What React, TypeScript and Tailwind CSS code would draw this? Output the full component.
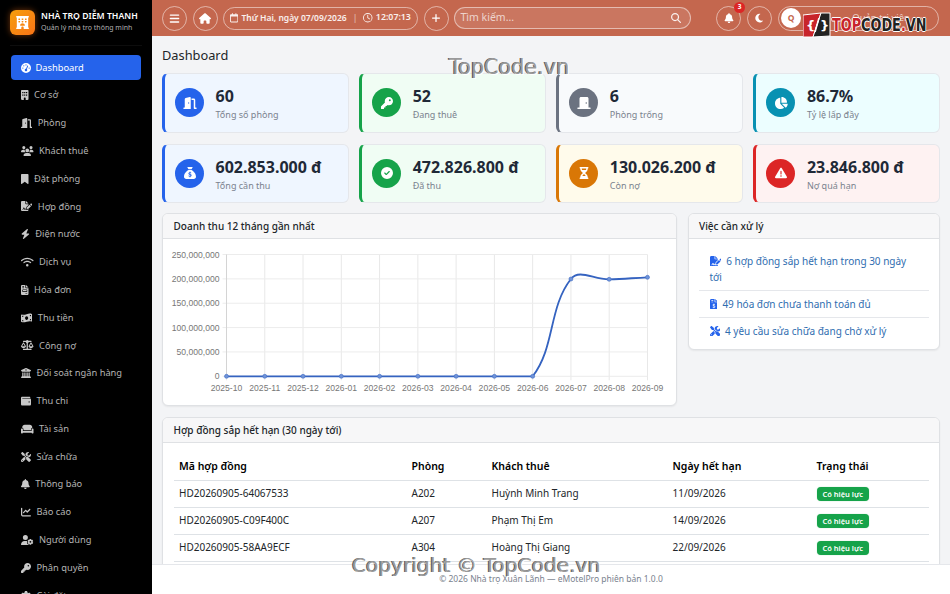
import React from 'react';
import {
  FaBars, FaHouse, FaRegCalendar, FaRegClock, FaPlus, FaMagnifyingGlass, FaBell, FaMoon, FaChevronDown,
  FaGaugeHigh, FaBuilding, FaDoorOpen, FaUsers, FaBookmark, FaFileSignature, FaBolt, FaWifi, FaFileInvoice,
  FaMoneyBillWave, FaScaleBalanced, FaBuildingColumns, FaWallet, FaCouch, FaScrewdriverWrench, FaChartLine,
  FaUserGear, FaKey, FaGear, FaDoorClosed, FaChartPie, FaSackDollar, FaCircleCheck, FaHourglassHalf,
  FaTriangleExclamation, FaFileInvoiceDollar, FaHotel,
} from 'react-icons/fa6';

// w is the icon's natural width at 10px tall, the labels start right after it
const navItems = [
  { icon: FaBuilding, w: 'w-[7.5px]', text: 'Cơ sở' },
  { icon: FaDoorOpen, w: 'w-[11.25px]', text: 'Phòng' },
  { icon: FaUsers, w: 'w-[12.5px]', text: 'Khách thuê' },
  { icon: FaBookmark, w: 'w-[7.5px]', text: 'Đặt phòng' },
  { icon: FaFileSignature, w: 'w-[11.25px]', text: 'Hợp đồng' },
  { icon: FaBolt, w: 'w-[8.75px]', text: 'Điện nước' },
  { icon: FaWifi, w: 'w-[12.5px]', text: 'Dịch vụ' },
  { icon: FaFileInvoice, w: 'w-[7.5px]', text: 'Hóa đơn' },
  { icon: FaMoneyBillWave, w: 'w-[11.25px]', text: 'Thu tiền' },
  { icon: FaScaleBalanced, w: 'w-[12.5px]', text: 'Công nợ' },
  { icon: FaBuildingColumns, w: 'w-[10px]', text: 'Đối soát ngân hàng' },
  { icon: FaWallet, w: 'w-[10px]', text: 'Thu chi' },
  { icon: FaCouch, w: 'w-[12.5px]', text: 'Tài sản' },
  { icon: FaScrewdriverWrench, w: 'w-[10px]', text: 'Sửa chữa' },
  { icon: FaBell, w: 'w-[8.75px]', text: 'Thông báo' },
  { icon: FaChartLine, w: 'w-[10px]', text: 'Báo cáo' },
  { icon: FaUserGear, w: 'w-[12.5px]', text: 'Người dùng' },
  { icon: FaKey, w: 'w-[10px]', text: 'Phân quyền' },
  { icon: FaGear, w: 'w-[10px]', text: 'Cài đặt' },
];

const stats = [
  { icon: FaDoorOpen, value: '60', label: 'Tổng số phòng', card: 'bg-[#eff6ff] border-l-[#2563eb]', dot: 'bg-[#2563eb]' },
  { icon: FaKey, value: '52', label: 'Đang thuê', card: 'bg-[#f0fdf4] border-l-[#16a34a]', dot: 'bg-[#16a34a]' },
  { icon: FaDoorClosed, value: '6', label: 'Phòng trống', card: 'bg-[#f8fafc] border-l-[#6b7280]', dot: 'bg-[#6b7280]' },
  { icon: FaChartPie, value: '86.7%', label: 'Tỷ lệ lấp đầy', card: 'bg-[#ecfeff] border-l-[#0891b2]', dot: 'bg-[#0891b2]' },
  { icon: FaSackDollar, value: '602.853.000 đ', label: 'Tổng cần thu', card: 'bg-[#eff6ff] border-l-[#2563eb]', dot: 'bg-[#2563eb]' },
  { icon: FaCircleCheck, value: '472.826.800 đ', label: 'Đã thu', card: 'bg-[#f0fdf4] border-l-[#16a34a]', dot: 'bg-[#16a34a]' },
  { icon: FaHourglassHalf, value: '130.026.200 đ', label: 'Còn nợ', card: 'bg-[#fffbeb] border-l-[#d97706]', dot: 'bg-[#d97706]' },
  { icon: FaTriangleExclamation, value: '23.846.800 đ', label: 'Nợ quá hạn', card: 'bg-[#fef2f2] border-l-[#dc2626]', dot: 'bg-[#dc2626]' },
];

const contracts = [
  { code: 'HD20260905-64067533', room: 'A202', name: 'Huỳnh Minh Trang', date: '11/09/2026' },
  { code: 'HD20260905-C09F400C', room: 'A207', name: 'Phạm Thị Em', date: '14/09/2026' },
  { code: 'HD20260905-58AA9ECF', room: 'A304', name: 'Hoàng Thị Giang', date: '22/09/2026' },
];

const months = ['2025-10', '2025-11', '2025-12', '2026-01', '2026-02', '2026-03', '2026-04', '2026-05', '2026-06', '2026-07', '2026-08', '2026-09'];
const ticks = ['250,000,000', '200,000,000', '150,000,000', '100,000,000', '50,000,000', '0'];

// chart area inside the svg, which starts at (163, 238) on the page
const X0 = 63.5;
const XSTEP = 38.27;
const Y0 = 15.5;
const YSTEP = 24.36;

function RevenueChart() {
  const pts = months.map((_, i) => X0 + i * XSTEP);
  const base = Y0 + 5 * YSTEP;
  const ys = [...Array(9).fill(base), 40, 40.3, 38.3];
  return (
    <svg width="513" height="167" viewBox="0 0 513 167" className="block">
      {pts.map((x) => (
        <line key={x} x1={x} x2={x} y1={Y0} y2={base + 4} stroke="#e8e8e8" />
      ))}
      {ticks.map((t, i) => (
        <g key={t}>
          <line x1={X0 - 4} x2={pts[11]} y1={Y0 + i * YSTEP} y2={Y0 + i * YSTEP} stroke="#ececec" />
          <text x={X0 - 7} y={Y0 + i * YSTEP + 3} textAnchor="end" fontSize="8.6" fill="#777" fontFamily="'Liberation Sans', sans-serif">{t}</text>
        </g>
      ))}
      <line x1={X0} x2={X0} y1={Y0} y2={base} stroke="#d4d4d4" />
      <path
        d={`M${X0} ${base} L${pts[8]} ${base} C392 108.8 385.5 68.4 ${pts[9]} 40 C416.1 29.6 430.8 40.6 ${pts[10]} 40.3 C461.4 40 469 39 ${pts[11]} 38.3`}
        fill="none"
        stroke="#3563c0"
        strokeWidth="1.8"
      />
      {pts.map((x, i) => (
        <circle key={x} cx={x} cy={ys[i]} r="2" fill="#6f93d8" stroke="#3f6cc4" strokeWidth="0.6" />
      ))}
      {months.map((m, i) => (
        <text key={m} x={pts[i]} y={152} textAnchor="middle" fontSize="8.6" fill="#777" fontFamily="'Liberation Sans', sans-serif">{m}</text>
      ))}
    </svg>
  );
}

function RoundBtn({ children }: { children: React.ReactNode }) {
  return (
    <button className="relative flex h-[25px] w-[25px] shrink-0 items-center justify-center rounded-full border border-white/50 text-white">
      {children}
    </button>
  );
}

function Sidebar() {
  return (
    <aside className="flex w-[152px] shrink-0 flex-col overflow-hidden bg-black">
      <div className="mx-[10px] flex h-[46px] shrink-0 items-center gap-[6px] border-b border-white/5 pb-[1px]">
        <div className="flex h-[25px] w-[25px] shrink-0 items-center justify-center rounded-md bg-gradient-to-br from-[#f59e0b] to-[#f97316] text-[13px] text-white shadow-[0_0_6px_rgba(249,115,22,0.45)]">
          <FaHotel />
        </div>
        <div className="min-w-0">
          <div className="whitespace-nowrap text-[8.7px] font-semibold leading-[12px] text-white">NHÀ TRỌ DIỄM THANH</div>
          <div className="whitespace-nowrap text-[7px] leading-[12px] text-[#b0b0b0]">Quản lý nhà trọ thông minh</div>
        </div>
      </div>
      <nav className="mt-[9px] flex flex-col gap-[2.8px] pl-[10.5px] pr-[11.5px]">
        <a className="flex h-[25px] shrink-0 items-center gap-[4.5px] rounded bg-[#2563eb] pl-[10.5px] text-[9.3px] text-white">
          <FaGaugeHigh className="h-[10px] w-[10px]" />
          Dashboard
        </a>
        {navItems.map(({ icon: Icon, w, text }) => (
          <a key={text} className="flex h-[25px] shrink-0 items-center gap-[5.5px] pl-[10.5px] text-[9.3px] text-[#b4b4b4]">
            <Icon className={`h-[10px] shrink-0 text-[#c8c8c8] ${w}`} />
            {text}
          </a>
        ))}
      </nav>
    </aside>
  );
}

function Topbar() {
  return (
    <header className="flex h-9 shrink-0 items-center gap-[5.5px] bg-[#c4674e] pl-[10px] pr-[11px]">
      <RoundBtn><FaBars className="h-[11px] w-[11px]" /></RoundBtn>
      <RoundBtn><FaHouse className="h-[11px] w-[12px]" /></RoundBtn>
      <div className="flex h-[23px] w-[195px] shrink-0 items-center justify-center gap-[3px] whitespace-nowrap rounded-full border border-white/50 text-[8.5px] font-semibold text-white/90">
        <FaRegCalendar className="h-[9.5px] w-[8.3px]" />
        <span>Thứ Hai, ngày 07/09/2026</span>
        <span className="mx-[3px] font-normal text-white/60">|</span>
        <FaRegClock className="h-[9.5px] w-[9.5px]" />
        <span className="text-[8.8px]">12:07:13</span>
      </div>
      <RoundBtn><FaPlus className="h-[10px] w-[10px]" /></RoundBtn>
      <div className="flex h-[22px] w-[237px] shrink-0 items-center justify-between rounded-full border border-white/50 bg-white/10 pl-[5.5px] pr-[9px] text-[10.5px] text-white/70">
        <span>Tìm kiếm...</span>
        <FaMagnifyingGlass className="h-[10px] w-[10px] text-white/90" />
      </div>
      <div className="ml-auto flex items-center gap-[5.5px]">
        <RoundBtn>
          <FaBell className="h-[10px] w-[10px]" />
          <span className="absolute -right-[5px] -top-[5px] flex h-[11px] w-[11px] items-center justify-center rounded-full bg-[#dc2626] text-[6.5px] font-bold text-white">3</span>
        </RoundBtn>
        <RoundBtn><FaMoon className="h-[10px] w-[10px]" /></RoundBtn>
        <div className="ml-[1px] flex h-[25px] w-[161px] items-center gap-[4px] rounded-full border border-white/50 pl-[2px] pr-[12px] text-[9.5px] text-white/70">
          <span className="flex h-5 w-5 items-center justify-center rounded-full bg-white text-[8.5px] font-bold text-[#c4674e]">Q</span>
          <span className="flex-1 whitespace-nowrap text-right">Quản trị viên</span>
          <FaChevronDown className="ml-[6px] h-[6px] w-[6px]" />
        </div>
      </div>
    </header>
  );
}

function Card({ title, className, children }: { title: string; className?: string; children: React.ReactNode }) {
  return (
    <section className={`overflow-hidden rounded-md border border-[#dfe1e4] bg-white shadow-[0_1px_2px_rgba(0,0,0,0.06)] ${className ?? ''}`}>
      <div className="flex h-[25px] items-center border-b border-[#dfe1e4] bg-[#f7f7f8] px-[10.5px] text-[10px] font-medium text-[#212529]">{title}</div>
      {children}
    </section>
  );
}

export default function App() {
  return (
    <div className="relative flex h-[594px] w-[950px] overflow-hidden bg-[#f3f4f6] font-['Noto_Sans',sans-serif]">
      <Sidebar />
      <div className="flex min-w-0 flex-1 flex-col">
        <Topbar />
        <main className="min-h-0 flex-1 overflow-hidden px-[10px]">
          <h1 className="mb-[9px] mt-[10px] text-[12.8px] font-normal leading-[18px] text-[#212529]">Dashboard</h1>

          {/* Stat cards */}
          <div className="grid grid-cols-4 gap-x-[10.5px] gap-y-[11px]">
            {stats.map(({ icon: Icon, value, label, card, dot }) => (
              <div key={label} className={`flex h-[59.5px] items-center gap-[11.5px] rounded-md border border-[#e5e7eb] border-l-[3px] pl-[10px] ${card}`}>
                <div className={`flex h-[29px] w-[29px] shrink-0 items-center justify-center rounded-full text-white ${dot}`}>
                  <Icon className="h-[12px] w-[14px]" />
                </div>
                <div className="pt-[2px]">
                  <div className="whitespace-nowrap text-[16px] font-bold leading-[20px] text-[#1f2937]">{value}</div>
                  <div className="mt-[3px] text-[9px] leading-[12px] text-[#7a828e]">{label}</div>
                </div>
              </div>
            ))}
          </div>

          <div className="mt-[10px] flex items-start gap-[10.5px]">
            <Card title="Doanh thu 12 tháng gần nhất" className="h-[193px] w-[515px] shrink-0">
              <RevenueChart />
            </Card>
            <Card title="Việc cần xử lý" className="flex-1">
              <div className="px-[10.5px] pb-[10px] pt-[14px] text-[10px] leading-[16px] text-[#2f6db0]">
                <div className="border-b border-[#e5e7eb] pb-[5px] pl-[10.5px] pr-[12px]">
                  <FaFileSignature className="mr-[5px] inline h-[10.5px] w-[11.8px] align-[-1px] text-[#2563eb]" />
                  6 hợp đồng sắp hết hạn trong 30 ngày tới
                </div>
                <div className="border-b border-[#e5e7eb] py-[5px] pl-[10.5px]">
                  <FaFileInvoiceDollar className="mr-[5px] inline h-[10.5px] w-[7.9px] align-[-1px] text-[#2563eb]" />
                  49 hóa đơn chưa thanh toán đủ
                </div>
                <div className="pl-[10.5px] pt-[5px]">
                  <FaScrewdriverWrench className="mr-[5px] inline h-[10.5px] w-[10.5px] align-[-1px] text-[#2563eb]" />
                  4 yêu cầu sửa chữa đang chờ xử lý
                </div>
              </div>
            </Card>
          </div>

          {/* runs on under the footer */}
          <Card title="Hợp đồng sắp hết hạn (30 ngày tới)" className="mt-[11px]">
            <div className="px-[10.5px] pb-[21px] pt-[11px]">
              <table className="w-full table-fixed border-collapse text-left text-[10px] text-[#212529]">
                <thead>
                  <tr className="h-[26px] border-b border-[#dee2e6] text-[10.5px] text-black">
                    <th className="w-[232.5px] pl-[5.5px] font-semibold">Mã hợp đồng</th>
                    <th className="w-[80px] pl-[5.5px] font-semibold">Phòng</th>
                    <th className="w-[181px] pl-[5.5px] font-semibold">Khách thuê</th>
                    <th className="w-[144px] pl-[5.5px] font-semibold">Ngày hết hạn</th>
                    <th className="pl-[5.5px] font-semibold">Trạng thái</th>
                  </tr>
                </thead>
                <tbody>
                  {contracts.map((c) => (
                    <tr key={c.code} className="h-[27px] border-b border-[#dee2e6]">
                      <td className="pl-[5.5px]">{c.code}</td>
                      <td className="pl-[5.5px]">{c.room}</td>
                      <td className="pl-[5.5px]">{c.name}</td>
                      <td className="pl-[5.5px]">{c.date}</td>
                      <td className="pl-[5.5px]">
                        <span className="inline-flex h-[14px] w-[52.5px] items-center justify-center rounded bg-[#16a34a] text-[7.5px] font-semibold text-white shadow-[0_0_1px_rgba(22,163,74,0.5)]">Có hiệu lực</span>
                      </td>
                    </tr>
                  ))}
                </tbody>
              </table>
            </div>
          </Card>
        </main>
        <footer className="flex h-[30px] shrink-0 items-center justify-center border-t border-[#e5e7eb] bg-white text-[8.5px] text-[#7a828e]">
          © 2026 Nhà trọ Xuân Lãnh — eMotelPro phiên bản 1.0.0
        </footer>
      </div>

      {/* Watermarks lying over the page */}
      <div className="pointer-events-none absolute left-[449px] top-[54px] font-['DejaVu_Sans',sans-serif] text-[20.8px] leading-[26px] text-[#9a9a9a] [text-shadow:1px_1px_0_#fff,-1px_0_0_#555]">TopCode.vn</div>
      <div className="pointer-events-none absolute left-[352px] top-[552px] font-['DejaVu_Sans',sans-serif] text-[20.2px] leading-[26px] text-[#9a9a9a] [text-shadow:1px_1px_0_#fff,-1px_0_0_#555]">Copyright © TopCode.vn</div>
      <div className="pointer-events-none absolute left-[803px] top-[12px] flex items-center gap-[1px]">
        <svg width="28" height="26" viewBox="0 0 28 26">
          <path d="M0 3 L18 1 L10 25 L0 25 Z" fill="#c8242b" stroke="#fff" strokeWidth="1" />
          <path d="M18 1 L27 1 L27 24 L10 25 Z" fill="#222" stroke="#fff" strokeWidth="1" />
          <text x="3" y="18" fontSize="13" fontWeight="700" fill="#fff" fontFamily="'DejaVu Sans', sans-serif">{'{'}</text>
          <path d="M16 6 L12 20" stroke="#fff" strokeWidth="1.6" />
          <text x="17" y="18" fontSize="13" fontWeight="700" fill="#fff" fontFamily="'DejaVu Sans', sans-serif">{'}'}</text>
        </svg>
        <div className="origin-left scale-x-[0.84] whitespace-nowrap font-['DejaVu_Sans_Condensed','DejaVu_Sans',sans-serif] text-[17px] font-bold leading-[26px] [text-shadow:1px_0_0_#fff,-1px_0_0_#fff,0_1px_0_#fff,0_-1px_0_#fff]">
          <span className="text-[#c8242b]">TOP</span>
          <span className="text-[#222]">CODE</span>
          <span className="text-[#c8242b]">.</span>
          <span className="text-[#222]">VN</span>
        </div>
      </div>
    </div>
  );
}
